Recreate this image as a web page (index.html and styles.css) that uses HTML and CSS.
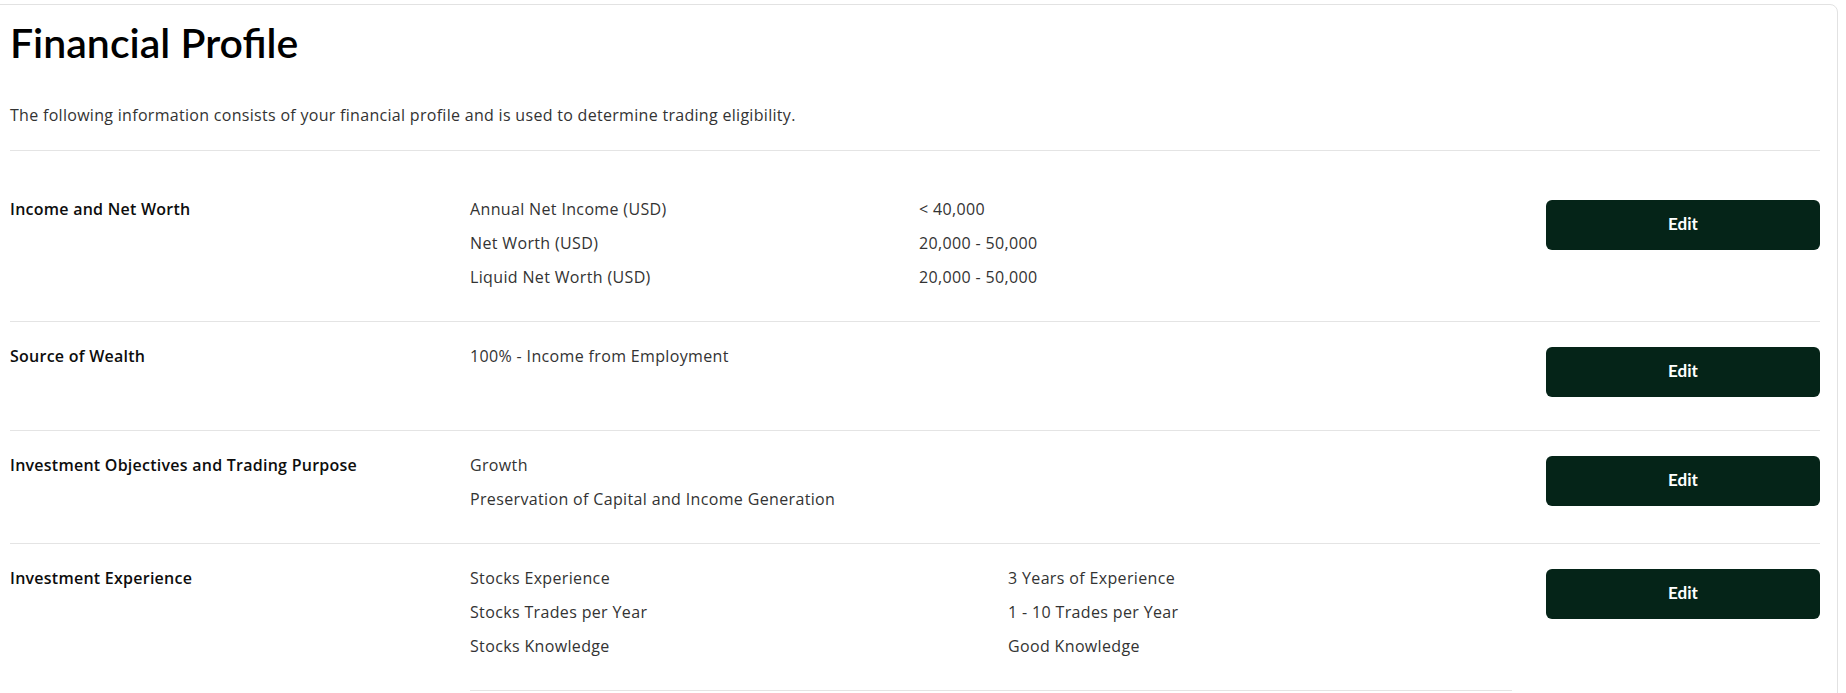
FILE: index.html
```html
<!DOCTYPE html>
<html lang="en">
<head>
<meta charset="utf-8">
<title>Financial Profile</title>
<link rel="stylesheet" href="styles.css">
</head>
<body>
<main class="card">
  <header class="header">
    <h1 class="title">Financial Profile</h1>
    <p class="subtitle">The following information consists of your financial profile and is used to determine trading eligibility.</p>
  </header>
  <section class="list">
    <div class="row">
      <div class="row-label">Income and Net Worth</div>
      <div class="row-values">
        <div class="pairs pairs-income">
          <span class="line">Annual Net Income (USD)</span><span class="line">&lt; 40,000</span>
          <span class="line">Net Worth (USD)</span><span class="line">20,000 - 50,000</span>
          <span class="line">Liquid Net Worth (USD)</span><span class="line">20,000 - 50,000</span>
        </div>
      </div>
      <div class="row-action"><button class="edit-btn" type="button">Edit</button></div>
    </div>
    <div class="row">
      <div class="row-label">Source of Wealth</div>
      <div class="row-values">
        <div class="line">100% - Income from Employment</div>
      </div>
      <div class="row-action"><button class="edit-btn" type="button">Edit</button></div>
    </div>
    <div class="row">
      <div class="row-label">Investment Objectives and Trading Purpose</div>
      <div class="row-values">
        <div class="line">Growth</div>
        <div class="line">Preservation of Capital and Income Generation</div>
      </div>
      <div class="row-action"><button class="edit-btn" type="button">Edit</button></div>
    </div>
    <div class="row row-open">
      <div class="row-label">Investment Experience</div>
      <div class="row-values">
        <div class="pairs pairs-exp sub-block">
          <span class="line">Stocks Experience</span><span class="line">3 Years of Experience</span>
          <span class="line">Stocks Trades per Year</span><span class="line">1 - 10 Trades per Year</span>
          <span class="line">Stocks Knowledge</span><span class="line">Good Knowledge</span>
        </div>
      </div>
      <div class="row-action"><button class="edit-btn" type="button">Edit</button></div>
    </div>
  </section>
</main>
</body>
</html>
```

FILE: styles.css
```css
html, body {
  margin: 0;
  padding: 0;
  background: #ffffff;
}

body {
  font-family: "Open Sans", "Liberation Sans", Arial, sans-serif;
  color: #333333;
  font-size: 16px;
}

.card {
  margin: 4px 8px 0 -12px;
  border: 1px solid #e2e2e2;
  border-radius: 8px;
  padding: 14px 17px 0 21px;
  background: #ffffff;
}

.header {
  border-bottom: 1px solid #e4e4e4;
  padding-bottom: 23px;
}

.title {
  margin: 0;
  font-family: Lato, "Open Sans", sans-serif;
  font-size: 41px;
  line-height: 48px;
  font-weight: 600;
  color: #000000;
}

.subtitle {
  margin: 36px 0 0;
  font-size: 16px;
  line-height: 24px;
  letter-spacing: 0.3px;
  color: #333333;
}

.list {
  margin-top: 24px;
}

.row {
  display: flex;
  align-items: flex-start;
  padding: 17px 0 27px;
  border-bottom: 1px solid #e4e4e4;
}

.row-open {
  border-bottom: none;
}

.row-label {
  width: 460px;
  flex: 0 0 460px;
  font-weight: 600;
  letter-spacing: 0.25px;
  color: #0d0d0d;
  line-height: 34px;
}

.row-values {
  flex: 1 1 auto;
  margin-right: 34px;
}

.line {
  display: block;
  line-height: 34px;
  letter-spacing: 0.35px;
  color: #333333;
}

.pairs {
  display: grid;
}

.pairs-income {
  grid-template-columns: 449px 1fr;
}

.pairs-exp {
  grid-template-columns: 538px 1fr;
}

.sub-block {
  padding-bottom: 27px;
  border-bottom: 1px solid #e4e4e4;
}

.row-action {
  flex: 0 0 274px;
  padding: 8px 0 6px;
}

.edit-btn {
  display: block;
  width: 274px;
  height: 50px;
  padding: 0 0 4px;
  border: none;
  border-radius: 6px;
  background: #052418;
  color: #ffffff;
  font-family: Lato, "Open Sans", sans-serif;
  font-size: 17px;
  font-weight: 700;
  cursor: pointer;
}
```
